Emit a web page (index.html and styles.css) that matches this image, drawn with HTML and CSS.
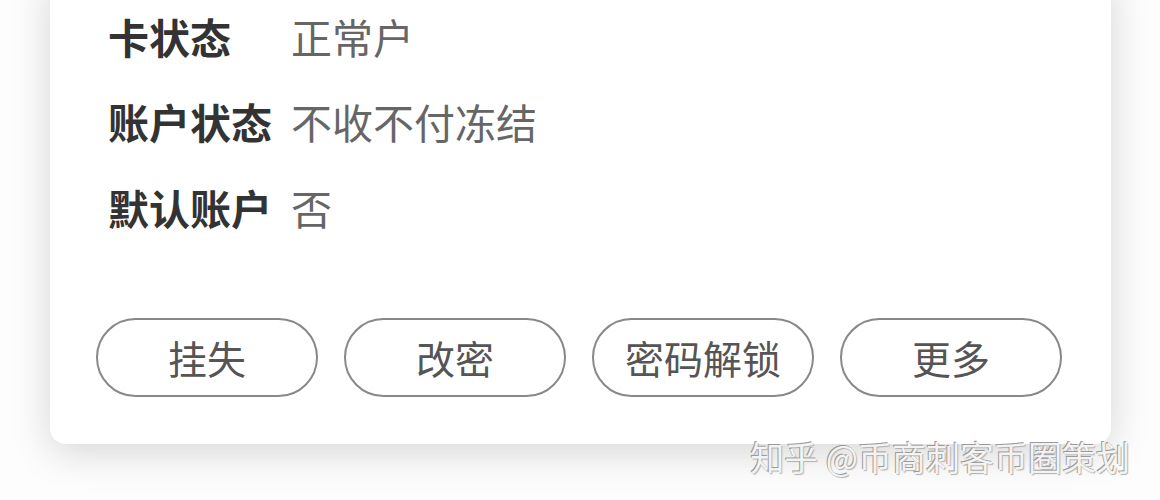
FILE: index.html
```html
<!DOCTYPE html>
<html lang="zh-CN">
	<head>
		<meta charset="utf-8" />
		<title>账户信息</title>
		<link rel="stylesheet" href="styles.css">
	</head>
	<body>
		<div id="page">
			<div class="card">
				<div class="info">
					<div class="row"><span class="label">卡状态</span><span class="value">正常户</span></div>
					<div class="row"><span class="label">账户状态</span><span class="value">不收不付冻结</span></div>
					<div class="row"><span class="label">默认账户</span><span class="value">否</span></div>
				</div>
				<div class="actions">
					<button class="pill">挂失</button>
					<button class="pill">改密</button>
					<button class="pill">密码解锁</button>
					<button class="pill">更多</button>
				</div>
			</div>
			<div class="watermark">知乎 @币商刺客币圈策划</div>
		</div>
	</body>
</html>
```

FILE: styles.css
```css
html, body {
	margin: 0;
	padding: 0;
	background-color: #fdfdfd;
	font-family: "Noto Sans CJK SC", "Noto Sans", sans-serif;
}

#page {
	position: relative;
	width: 1160px;
	height: 500px;
	overflow: hidden;
}

.card {
	margin: -30px 49px 0 50px;
	padding: 23px 48px 47px 46px;
	background-color: #fff;
	border-radius: 16px;
	box-shadow: 0 8px 40px rgba(0,0,0,0.16);
}

.info {
	padding-left: 12px;
}
.info .row {
	display: flex;
	align-items: center;
	height: 85.5px;
	font-size: 41px;
}
.info .label {
	width: 183px;
	font-weight: bold;
	color: #333;
}
.info .value {
	color: #666;
}

.actions {
	display: flex;
	gap: 26px;
	margin-top: 68px;
}
.pill {
	width: 222px;
	height: 79px;
	padding: 0;
	border: 2px solid #888;
	border-radius: 40px;
	background-color: #fff;
	color: #555;
	font-family: inherit;
	font-size: 39px;
}

.watermark {
	position: absolute;
	right: 30px;
	top: 432px;
	font-size: 34px;
	color: #f3f3f3;
	text-shadow: -1px -1px 0 #9a9a9a, 1px 1px 1px #b0b0b0;
}
```
